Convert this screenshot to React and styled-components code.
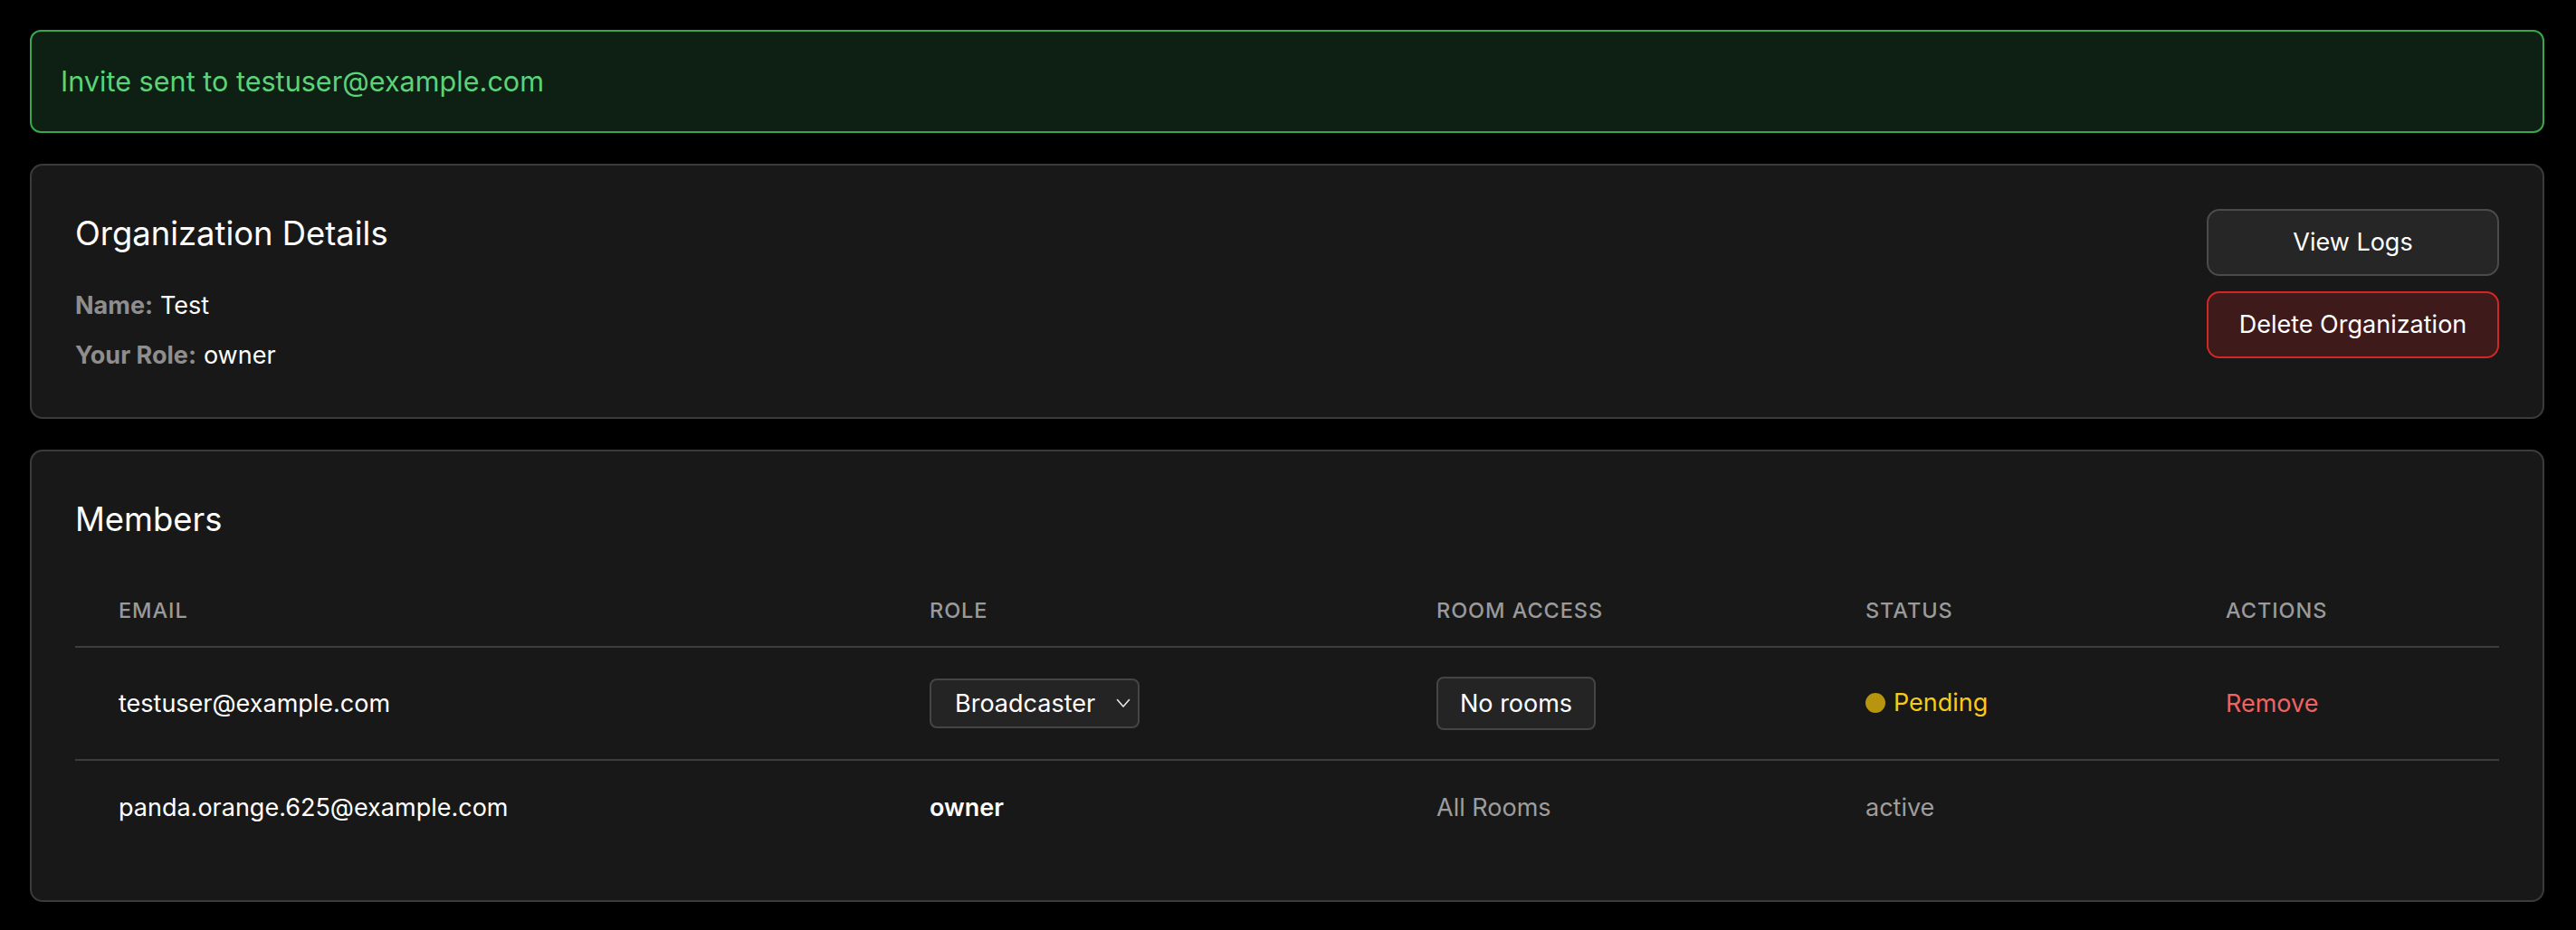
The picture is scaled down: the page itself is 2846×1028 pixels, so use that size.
import React from 'react';
import styled, { createGlobalStyle } from 'styled-components';

const GlobalStyle = createGlobalStyle`
  *, *::before, *::after {
    box-sizing: border-box;
  }
  body {
    margin: 0;
    background: #000;
    font-family: Inter, "Noto Sans", "Liberation Sans", sans-serif;
    color: #fff;
  }
`;

const Page = styled.main`
  display: flex;
  flex-direction: column;
  gap: 34px;
  padding: 33px 35px 33px 33px;
`;

const Alert = styled.div`
  border: 2px solid #3aa64b;
  border-radius: 12px;
  background: #0e1f13;
  color: #5cd27a;
  font-size: 30.6px;
  line-height: 46px;
  padding: 32px 32px;
`;

const Card = styled.section`
  background: #181818;
  border: 2px solid #3b3b3b;
  border-radius: 14px;
  padding: 48px 48px ${({ $bottom }) => $bottom || '48px'};
`;

const DetailsLayout = styled.div`
  display: flex;
  justify-content: space-between;
  align-items: flex-start;
`;

const Info = styled.div`
  display: flex;
  flex-direction: column;
`;

const CardTitle = styled.h2`
  margin: 0;
  font-size: 36.4px;
  font-weight: 400;
  line-height: 54px;
  color: #fff;
`;

const DetailList = styled.div`
  display: flex;
  flex-direction: column;
  gap: 15px;
  margin-top: 33px;
`;

const DetailRow = styled.div`
  font-size: 27px;
  line-height: 40px;
  color: #fff;
`;

const DetailLabel = styled.span`
  color: #8e8e8e;
  font-weight: 700;
  margin-right: 8px;
`;

const ButtonStack = styled.div`
  display: flex;
  flex-direction: column;
  gap: 17px;
  width: 323px;
`;

const ActionButton = styled.button`
  font-family: inherit;
  font-size: 27px;
  font-weight: 400;
  line-height: 36px;
  color: #fff;
  padding: 17px 32px;
  border-radius: 14px;
  border: 2px solid ${({ $danger }) => ($danger ? '#d32727' : '#4b4b4b')};
  background: ${({ $danger }) => ($danger ? '#3e1a1a' : '#262626')};
  cursor: pointer;
`;

const Table = styled.table`
  width: 100%;
  margin-top: 34px;
  border-collapse: separate;
  border-spacing: 0;
  table-layout: fixed;
`;

const Th = styled.th`
  width: ${({ $width }) => $width || 'auto'};
  text-align: left;
  padding: 22px 48px;
  font-size: 23.5px;
  line-height: 35px;
  font-weight: 500;
  letter-spacing: 0.04em;
  text-transform: uppercase;
  color: #9a9a9a;
  border-bottom: 2px solid #3d3d3d;
`;

const Td = styled.td`
  padding: 32px 48px;
  font-size: 27px;
  line-height: 40px;
  vertical-align: middle;
  color: ${({ $muted }) => ($muted ? '#9d9d9d' : '#fff')};
  font-weight: ${({ $bold }) => ($bold ? 600 : 400)};
  border-bottom: ${({ $last }) => ($last ? 'none' : '2px solid #3d3d3d')};
`;

const SelectBox = styled.div`
  display: inline-flex;
  align-items: center;
  justify-content: space-between;
  width: 232px;
  height: 55px;
  padding: 0 8px 0 26px;
  background: #242424;
  border: 2px solid #454545;
  border-radius: 8px;
  font-size: 27px;
  color: #fff;
`;

const RoomsButton = styled.button`
  font-family: inherit;
  font-size: 27px;
  line-height: 38px;
  height: 59px;
  padding: 0 24px;
  color: #fff;
  background: #242424;
  border: 2px solid #454545;
  border-radius: 8px;
`;

const Status = styled.span`
  display: inline-flex;
  align-items: center;
  gap: 9px;
  color: #f7ca16;
`;

const Dot = styled.span`
  width: 22px;
  height: 22px;
  border-radius: 50%;
  background: #b7950f;
`;

const RemoveLink = styled.span`
  color: #ef6363;
  cursor: pointer;
`;

const Chevron = () => (
  <svg width="16" height="11" viewBox="0 0 16 11" fill="none">
    <path d="M1.5 1.5 L8 9 L14.5 1.5" stroke="#e6e6e6" strokeWidth="1.6" strokeLinecap="round" strokeLinejoin="round" />
  </svg>
);

const App = () => (
  <>
    <GlobalStyle />
    <Page>
      <Alert>Invite sent to testuser@example.com</Alert>

      <Card>
        <DetailsLayout>
          <Info>
            <CardTitle>Organization Details</CardTitle>
            <DetailList>
              <DetailRow><DetailLabel>Name:</DetailLabel>Test</DetailRow>
              <DetailRow><DetailLabel>Your Role:</DetailLabel>owner</DetailRow>
            </DetailList>
          </Info>
          <ButtonStack>
            <ActionButton>View Logs</ActionButton>
            <ActionButton $danger>Delete Organization</ActionButton>
          </ButtonStack>
        </DetailsLayout>
      </Card>

      <Card $bottom="50px">
        <CardTitle>Members</CardTitle>
        <Table>
          <thead>
            <tr>
              <Th $width="896px">Email</Th>
              <Th $width="560px">Role</Th>
              <Th $width="474px">Room Access</Th>
              <Th $width="398px">Status</Th>
              <Th>Actions</Th>
            </tr>
          </thead>
          <tbody>
            <tr>
              <Td>testuser@example.com</Td>
              <Td>
                <SelectBox>
                  <span>Broadcaster</span>
                  <Chevron />
                </SelectBox>
              </Td>
              <Td><RoomsButton>No rooms</RoomsButton></Td>
              <Td><Status><Dot />Pending</Status></Td>
              <Td><RemoveLink>Remove</RemoveLink></Td>
            </tr>
            <tr>
              <Td $last>panda.orange.625@example.com</Td>
              <Td $last $bold>owner</Td>
              <Td $last $muted>All Rooms</Td>
              <Td $last $muted>active</Td>
              <Td $last />
            </tr>
          </tbody>
        </Table>
      </Card>
    </Page>
  </>
);

export default App;
